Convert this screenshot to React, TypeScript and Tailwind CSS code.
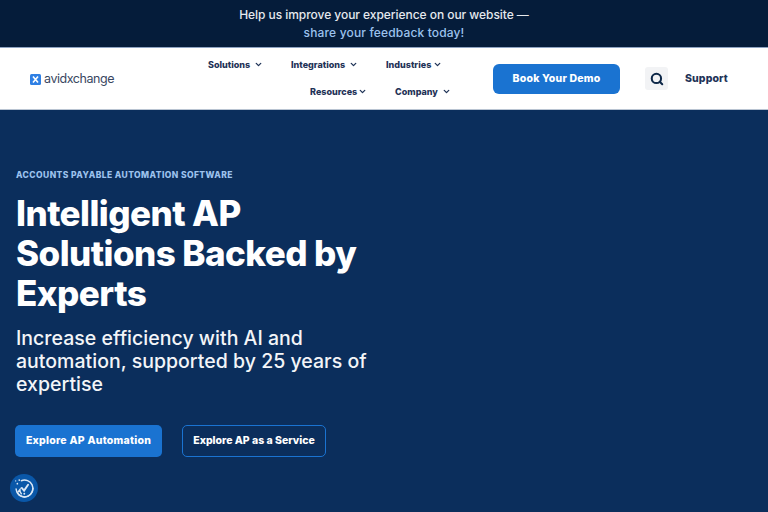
import { Search, ChevronDown } from "lucide-react";

const font = { fontFamily: "Inter, 'Noto Sans', sans-serif" };

function NavItem({ label, w }: { label: string; w: string }) {
  return (
    <a className={`flex items-center justify-between text-[9px] leading-none font-extrabold text-[#1f3357] ${w}`}>
      <span>{label}</span>
      <ChevronDown className="w-[9px] h-[9px]" strokeWidth={3.5} />
    </a>
  );
}

function Logo() {
  return (
    <div className="flex items-center gap-[3px] mt-[1px]">
      <svg width="11" height="11" viewBox="0 0 11 11">
        <rect width="11" height="11" rx="1.5" fill="#2f80e4" />
        <path d="M3 2.5 L8 8.5 M8 2.5 L3 8.5" stroke="#fff" strokeWidth="1.6" />
      </svg>
      <span className="text-[12.5px] leading-none text-[#39475f] tracking-[-0.45px]">avidxchange</span>
    </div>
  );
}

function ConsentIcon() {
  return (
    <svg width="21" height="21" viewBox="0 0 20 20" fill="none" stroke="#dbe7f5" strokeWidth="1.4">
      <path d="M7 2.6 A8 8 0 1 1 3.2 14.2 L5.6 11.2 A 4.6 4.6 0 0 0 7 15" strokeLinecap="round" />
      <path d="M2 10.5 A8 8 0 0 0 10 18 A8 8 0 0 0 18 10" strokeLinecap="round" />
      <path d="M7.4 9.5 L9.6 12 L13.4 6.4" strokeWidth="1.8" strokeLinecap="round" />
      <circle cx="9.8" cy="15" r="0.9" fill="#dbe7f5" stroke="none" />
      <circle cx="3.2" cy="5.4" r="0.8" fill="#dbe7f5" stroke="none" />
      <circle cx="5" cy="2" r="0.8" fill="#dbe7f5" stroke="none" />
      <circle cx="1.6" cy="2.8" r="0.6" fill="#dbe7f5" stroke="none" />
    </svg>
  );
}

export default function App() {
  return (
    <div style={font} className="w-[768px] h-[512px] overflow-hidden flex flex-col bg-[#0b2e5c]">
      <div className="h-[48px] shrink-0 bg-[#051c3a] border-b border-[#8ea3c2] flex flex-col items-center justify-center text-[12px] leading-[18px] font-medium">
        <p className="text-[#e6e9ee] tracking-[-0.05px]">Help us improve your experience on our website —</p>
        <p className="text-[#9cc2ee] tracking-[0.15px]">share your feedback today!</p>
      </div>

      <header className="h-[62px] shrink-0 bg-white border-b border-[#b9c4d2] flex items-center pl-[30px]">
        <Logo />
        <nav className="w-[258px] ml-[94px] mr-[27px] flex flex-col gap-[18px] -mt-[1px]">
          <div className="flex gap-[28px]">
            <NavItem label="Solutions" w="w-[55px]" />
            <NavItem label="Integrations" w="w-[67px]" />
            <NavItem label="Industries" w="w-[56px]" />
          </div>
          <div className="flex pl-[102px] gap-[28px]">
            <NavItem label="Resources" w="w-[57px]" />
            <NavItem label="Company" w="w-[56px]" />
          </div>
        </nav>
        <a className="w-[127px] h-[30px] rounded-[6px] bg-[#1a73d1] text-white text-[10.5px] font-extrabold tracking-[0.2px] flex items-center justify-center">
          Book Your Demo
        </a>
        <button className="ml-[25px] w-[23px] h-[23px] rounded-[3px] bg-[#f2f3f5] flex items-center justify-center">
          <Search className="w-[14px] h-[14px] text-[#0d2747]" strokeWidth={3.5} />
        </button>
        <a className="ml-[17px] mt-[1px] text-[10.5px] font-extrabold tracking-[0.1px] text-[#1f3357]">Support</a>
      </header>

      <main className="relative flex-1 pl-[16px] pt-[59px]">
        <p className="text-[8.5px] leading-[12px] font-extrabold tracking-[0.42px] text-[#9cc2ee]">ACCOUNTS PAYABLE AUTOMATION SOFTWARE</p>
        <h1 className="mt-[12px] w-[370px] text-[35px] leading-[40px] font-extrabold tracking-[-0.55px] text-white">
          Intelligent AP Solutions Backed by Experts
        </h1>
        <p className="mt-[14px] w-[370px] text-[19.5px] leading-[23px] font-medium tracking-[0.02px] text-[#f3f5f8]">
          Increase efficiency with AI and automation, supported by 25 years of expertise
        </p>
        <div className="mt-[29px] -ml-[1px] flex gap-[20px]">
          <a className="w-[147px] h-[32px] rounded-[5px] bg-[#1a73d1] text-white text-[10.5px] font-extrabold tracking-[0.25px] flex items-center justify-center">
            Explore AP Automation
          </a>
          <a className="w-[144px] h-[32px] rounded-[5px] border border-[#1a73d1] text-white text-[10.5px] font-extrabold flex items-center justify-center">
            Explore AP as a Service
          </a>
        </div>
        <div className="absolute left-[10px] top-[364px] w-[28px] h-[28px] rounded-full bg-[#0a57a8] flex items-center justify-center">
          <ConsentIcon />
        </div>
      </main>
    </div>
  );
}
